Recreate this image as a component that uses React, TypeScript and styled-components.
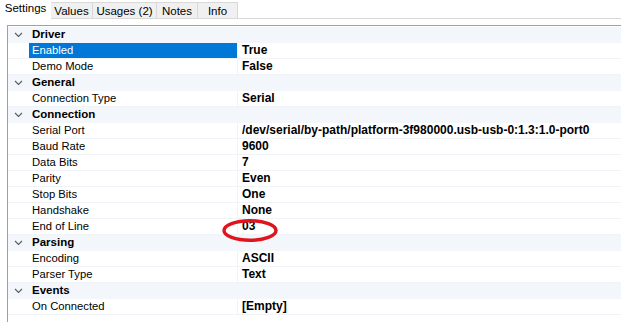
import React from "react";
import styled, { createGlobalStyle } from "styled-components";

const GlobalStyle = createGlobalStyle`
  html, body { margin: 0; padding: 0; background: #ffffff; }
  body {
    font-family: "Liberation Sans", Arial, sans-serif;
    font-size: 11px;
    color: #000;
    overflow: hidden;
  }
`;

const Page = styled.div`
  width: 621px;
  height: 322px;
  display: flex;
  flex-direction: column;
  overflow: hidden;
`;

const TabStrip = styled.div`
  display: flex;
  align-items: flex-end;
  height: 19px;
`;

const Tab = styled.div<{ $active?: boolean; $w: number }>`
  box-sizing: border-box;
  width: ${(p) => p.$w}px;
  height: ${(p) => (p.$active ? "19px" : "17px")};
  padding-bottom: ${(p) => (p.$active ? "4px" : "0")};
  display: flex;
  align-items: center;
  justify-content: center;
  font-size: 11.5px;
  background: ${(p) => (p.$active ? "#ffffff" : "#f0f0f0")};
  border: 1px solid ${(p) => (p.$active ? "#ffffff" : "#d9d9d9")};
  border-left-width: ${(p) => (p.$active ? "1px" : "0")};
  white-space: nowrap;
`;

const TabFill = styled.div`
  flex: 1;
  height: 1px;
  background: #d9d9d9;
`;

const Grid = styled.div`
  position: relative;
  margin: 6px 0 0 7px;
  border-left: 1px solid #a0a0a0;
  border-top: 1px solid #a0a0a0;
  padding-top: 1px;
  flex: 1;
`;

const CategoryRow = styled.div`
  display: grid;
  grid-template-columns: 21px 1fr;
  height: 16px;
  box-sizing: border-box;
  background: #f3f6fb;
  border-bottom: 1px solid #f3f6fb;
  align-items: center;
`;

const Chevron = styled.svg`
  display: block;
  margin-left: 6px;
`;

const CategoryTitle = styled.span`
  font-weight: bold;
  font-size: 11.5px;
  padding-left: 3px;
  line-height: 15px;
`;

const PropRow = styled.div`
  display: grid;
  grid-template-columns: 21px 209px 1fr;
  height: 16px;
  box-sizing: border-box;
  border-bottom: 1px solid #f0f3f8;
`;

const Gutter = styled.div`
  background: #ffffff;
`;

const Label = styled.div<{ $selected?: boolean }>`
  box-sizing: border-box;
  padding-left: 3px;
  line-height: 15px;
  font-size: 11.25px;
  border-right: 1px solid #f0f3f8;
  background: ${(p) => (p.$selected ? "#0078d7" : "#ffffff")};
  color: ${(p) => (p.$selected ? "#ffffff" : "#000000")};
  white-space: nowrap;
`;

const Value = styled.div`
  padding-left: 4px;
  line-height: 15px;
  font-size: 12px;
  font-weight: bold;
  white-space: nowrap;
`;

const Circle = styled.svg`
  position: absolute;
  left: 213px;
  top: 192px;
  pointer-events: none;
`;

type Prop = { label: string; value: string; selected?: boolean };
type Cat = { name: string; props: Prop[] };

const data: Cat[] = [
  {
    name: "Driver",
    props: [
      { label: "Enabled", value: "True", selected: true },
      { label: "Demo Mode", value: "False" },
    ],
  },
  { name: "General", props: [{ label: "Connection Type", value: "Serial" }] },
  {
    name: "Connection",
    props: [
      { label: "Serial Port", value: "/dev/serial/by-path/platform-3f980000.usb-usb-0:1.3:1.0-port0" },
      { label: "Baud Rate", value: "9600" },
      { label: "Data Bits", value: "7" },
      { label: "Parity", value: "Even" },
      { label: "Stop Bits", value: "One" },
      { label: "Handshake", value: "None" },
      { label: "End of Line", value: "03" },
    ],
  },
  {
    name: "Parsing",
    props: [
      { label: "Encoding", value: "ASCII" },
      { label: "Parser Type", value: "Text" },
    ],
  },
  { name: "Events", props: [{ label: "On Connected", value: "[Empty]" }] },
];

const tabs: { name: string; w: number }[] = [
  { name: "Settings", w: 51 },
  { name: "Values", w: 42 },
  { name: "Usages (2)", w: 64 },
  { name: "Notes", w: 41 },
  { name: "Info", w: 40 },
];

export default function App() {
  return (
    <Page>
      <GlobalStyle />
      <TabStrip>
        {tabs.map((t, i) => (
          <Tab key={t.name} $active={i === 0} $w={t.w}>
            {t.name}
          </Tab>
        ))}
        <TabFill />
      </TabStrip>
      <Grid>
        {data.map((c) => (
          <React.Fragment key={c.name}>
            <CategoryRow>
              <Chevron width="9" height="6" viewBox="0 0 9 6">
                <path d="M1 1 L4.5 4.5 L8 1" fill="none" stroke="#5a5a5a" strokeWidth="1.1" />
              </Chevron>
              <CategoryTitle>{c.name}</CategoryTitle>
            </CategoryRow>
            {c.props.map((p) => (
              <PropRow key={p.label}>
                <Gutter />
                <Label $selected={p.selected}>{p.label}</Label>
                <Value>{p.value}</Value>
              </PropRow>
            ))}
          </React.Fragment>
        ))}
        <Circle width="60" height="26" viewBox="0 0 60 26">
          <ellipse cx="29" cy="12.5" rx="26" ry="9.8" fill="none" stroke="#e0141c" strokeWidth="3.4" />
        </Circle>
      </Grid>
    </Page>
  );
}
